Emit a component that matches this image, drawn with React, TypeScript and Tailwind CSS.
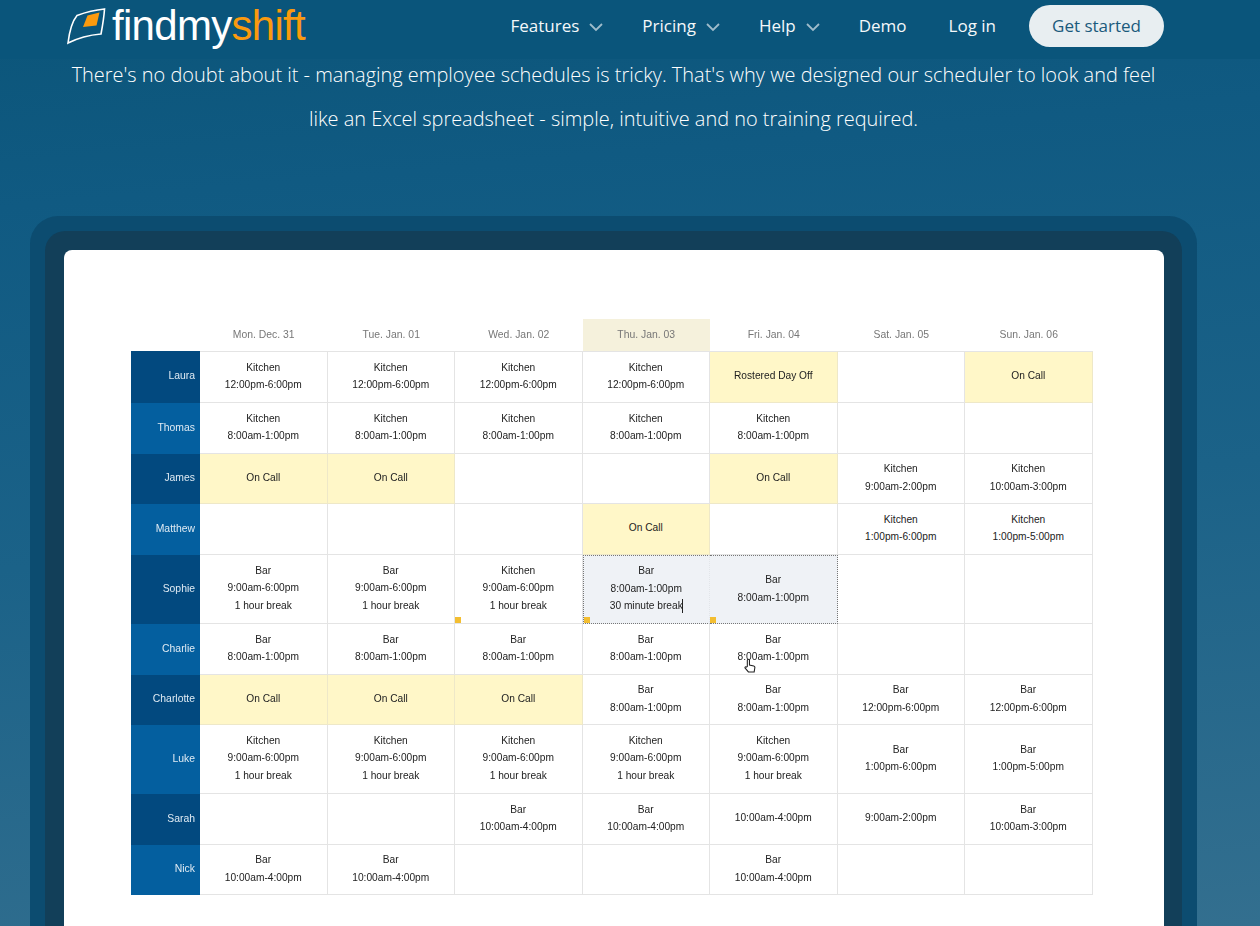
const H = "Kitchen";
type Cell = string[] | null;
const C: Cell = ["On Call"];
const R: Cell = ["Rostered Day Off"];
const k = (t: string, x?: string): Cell => (x ? [H, t, x] : [H, t]);
const b = (t: string, x?: string): Cell => (x ? ["Bar", t, x] : ["Bar", t]);
const rows: { name: string; h: string; cells: Cell[] }[] = [
  { name: "Laura", h: "h-[52px]", cells: [k("12:00pm-6:00pm"), k("12:00pm-6:00pm"), k("12:00pm-6:00pm"), k("12:00pm-6:00pm"), R, null, C] },
  { name: "Thomas", h: "h-[51px]", cells: [k("8:00am-1:00pm"), k("8:00am-1:00pm"), k("8:00am-1:00pm"), k("8:00am-1:00pm"), k("8:00am-1:00pm"), null, null] },
  { name: "James", h: "h-[50px]", cells: [C, C, null, null, C, k("9:00am-2:00pm"), k("10:00am-3:00pm")] },
  { name: "Matthew", h: "h-[51px]", cells: [null, null, null, C, null, k("1:00pm-6:00pm"), k("1:00pm-5:00pm")] },
  { name: "Sophie", h: "h-[69px]", cells: [b("9:00am-6:00pm", "1 hour break"), b("9:00am-6:00pm", "1 hour break"), k("9:00am-6:00pm", "1 hour break"), b("8:00am-1:00pm", "30 minute break"), b("8:00am-1:00pm"), null, null] },
  { name: "Charlie", h: "h-[51px]", cells: [b("8:00am-1:00pm"), b("8:00am-1:00pm"), b("8:00am-1:00pm"), b("8:00am-1:00pm"), b("8:00am-1:00pm"), null, null] },
  { name: "Charlotte", h: "h-[50px]", cells: [C, C, C, b("8:00am-1:00pm"), b("8:00am-1:00pm"), b("12:00pm-6:00pm"), b("12:00pm-6:00pm")] },
  { name: "Luke", h: "h-[69px]", cells: [k("9:00am-6:00pm", "1 hour break"), k("9:00am-6:00pm", "1 hour break"), k("9:00am-6:00pm", "1 hour break"), k("9:00am-6:00pm", "1 hour break"), k("9:00am-6:00pm", "1 hour break"), b("1:00pm-6:00pm"), b("1:00pm-5:00pm")] },
  { name: "Sarah", h: "h-[51px]", cells: [null, null, b("10:00am-4:00pm"), b("10:00am-4:00pm"), ["10:00am-4:00pm"], ["9:00am-2:00pm"], b("10:00am-3:00pm")] },
  { name: "Nick", h: "h-[50px]", cells: [b("10:00am-4:00pm"), b("10:00am-4:00pm"), null, null, b("10:00am-4:00pm"), null, null] },
];
const days = ["Mon. Dec. 31", "Tue. Jan. 01", "Wed. Jan. 02", "Thu. Jan. 03", "Fri. Jan. 04", "Sat. Jan. 05", "Sun. Jan. 06"];

function Chevron() {
  return (
    <svg width="14" height="9" viewBox="0 0 14 9" fill="none" className="ml-[10px] mt-[2px] text-[#9fbccb]">
      <path d="M1 1l6 6 6-6" stroke="currentColor" strokeWidth="1.8" />
    </svg>
  );
}

function Logo() {
  return (
    <div className="flex items-center">
      <svg width="40" height="38" viewBox="0 0 40 38" fill="none">
        <path d="M2 36C3.500 24 6 14.500 11 8.500 19 5.500 28 3 38.500 2 38 11 36.500 19 35 27 23 28 12 31 2 36z" stroke="#fff" strokeWidth="1.6" />
        <path d="M21.500 8.500 33.500 5.500 30.500 18.500 17 20z" fill="#fb9a0e" />
      </svg>
      <span className="ml-[6px] font-['Liberation_Sans',sans-serif] text-[42px] leading-none tracking-[-0.7px] text-white">
        findmy<span className="text-[#fb9a0e]">shift</span>
      </span>
    </div>
  );
}

function Row({ r, ri }: { r: (typeof rows)[number]; ri: number }) {
  const sophie = r.name === "Sophie";
  return (
    <div className={`flex ${r.h}`}>
      <div className={`flex w-[69px] items-center justify-end pb-[2px] pr-[5px] text-[10.4px] text-[#dfeaf3] ${ri % 2 === 0 ? "bg-[#02497f]" : "bg-[#045f9f]"}`}>
        {r.name}
      </div>
      {r.cells.map((c, i) => {
        const call = c === C || c === R;
        const selected = sophie && (i === 3 || i === 4);
        return (
          <div
            key={i}
            className={`relative flex w-[127.500px] flex-col items-center justify-center border-r border-b pb-[2px] text-[10.2px] leading-[17.5px] text-[#222] ${
              call ? "border-[#eee8c8] bg-[#fff7c8]" : selected ? "border-dotted border-[#777] bg-[#eff2f6]" : "border-[#e4e4e4] bg-white"
            } ${ri === 0 ? "border-t border-t-[#e4e4e4]" : ""} ${selected ? "border-t" : ""} ${selected && i === 3 ? "border-l" : ""} ${selected && i === 3 ? "border-r-[#e2e5e9]" : ""}`}
          >
            {c?.map((t, j) => (
              <span key={j} className="relative">
                {t}
                {selected && i === 3 && j === 2 && <span className="absolute right-0 top-[2px] h-[14px] w-px bg-[#222]" />}
              </span>
            ))}
            {sophie && (i === 2 || i === 3 || i === 4) && (
              <span className="absolute bottom-0 left-[0px] h-[6px] w-[6px] bg-[#f3be31]" />
            )}
            {r.name === "Charlie" && i === 4 && (
              <svg width="12" height="15" viewBox="0 0 11 14" className="absolute left-[34px] top-[34px]">
                <path d="M3 8V2.200a1 1 0 012 0V6.500l4 1c.8.300 1.200.800 1 1.600l-.6 3.900H4L1 9.500c-.6-1 .6-1.800 1.300-1z" fill="#fff" stroke="#222" strokeWidth="1" />
              </svg>
            )}
          </div>
        );
      })}
    </div>
  );
}

export default function App() {
  const link = "text-[17px] text-[#f4f8fa]";
  return (
    <div className="relative h-[926px] w-[1260px] overflow-hidden bg-[linear-gradient(175deg,#0b5579_0%,#105a82_20%,#1b6288_55%,#336f8f_100%)] font-['Open_Sans',sans-serif]">
      <nav className="absolute inset-x-0 top-0 z-10 flex h-[59px] items-center justify-between bg-[#0a557b] pb-[7px] pl-[66px] pr-[96px]">
        <Logo />
        <div className="flex items-center">
          <a className={`${link} flex items-center`}>Features<Chevron /></a>
          <a className={`${link} ml-[39px] flex items-center`}>Pricing<Chevron /></a>
          <a className={`${link} ml-[39px] flex items-center`}>Help<Chevron /></a>
          <a className={`${link} ml-[39px]`}>Demo</a>
          <a className={`${link} ml-[42px]`}>Log in</a>
          <a className="ml-[33px] flex h-[42px] w-[135px] items-center justify-center rounded-full bg-[#e8eef1] text-[17px] text-[#1a5a7c]">Get started</a>
        </div>
      </nav>
      <p className="pr-[33px] pt-[53px] text-center text-[19.950px] font-light leading-[44px] text-white">
        There's no doubt about it - managing employee schedules is tricky. That's why we designed our scheduler to look and feel
        <br />
        like an Excel spreadsheet - simple, intuitive and no training required.
      </p>
      <div className="ml-[30px] mt-[75px] w-[1167px] rounded-t-[28px] bg-[#0c4c70] p-[15px] pb-0">
        <div className="rounded-t-[20px] bg-[#123f59] pl-[19px] pr-[18px] pt-[19px]">
          <div className="h-[700px] rounded-t-[8px] bg-white pl-[67px] pt-[69px] font-['Liberation_Sans',sans-serif]">
            <div className="blur-[0.3px]">
              <div className="ml-[69px] flex h-[32px]">
                {days.map((d, i) => (
                  <div key={d} className={`flex w-[127.500px] items-center justify-center text-[10.4px] text-[#777] ${i === 3 ? "bg-[#f5f1dc]" : ""}`}>
                    {d}
                  </div>
                ))}
              </div>
              {rows.map((r, i) => (
                <Row key={r.name} r={r} ri={i} />
              ))}
            </div>
          </div>
        </div>
      </div>
    </div>
  );
}
